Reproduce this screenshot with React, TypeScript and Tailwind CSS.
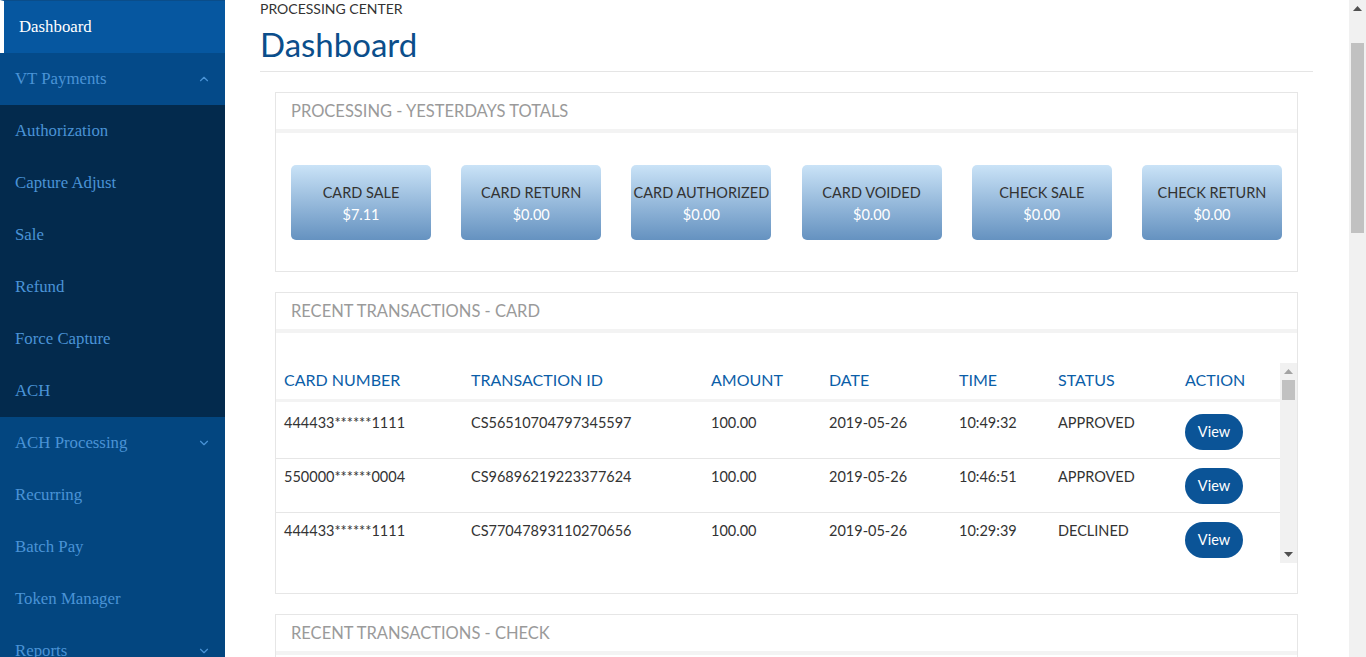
import { ChevronDown, ChevronUp } from "lucide-react";

const nav = [
  { label: "Dashboard", kind: "active" },
  { label: "VT Payments", kind: "open", chevron: "up" },
  { label: "Authorization", kind: "sub" },
  { label: "Capture Adjust", kind: "sub" },
  { label: "Sale", kind: "sub" },
  { label: "Refund", kind: "sub" },
  { label: "Force Capture", kind: "sub" },
  { label: "ACH", kind: "sub" },
  { label: "ACH Processing", kind: "item", chevron: "down" },
  { label: "Recurring", kind: "item" },
  { label: "Batch Pay", kind: "item" },
  { label: "Token Manager", kind: "item" },
  { label: "Reports", kind: "item", chevron: "down" },
];

const totals = [
  { label: "CARD SALE", value: "$7.11" },
  { label: "CARD RETURN", value: "$0.00" },
  { label: "CARD AUTHORIZED", value: "$0.00" },
  { label: "CARD VOIDED", value: "$0.00" },
  { label: "CHECK SALE", value: "$0.00" },
  { label: "CHECK RETURN", value: "$0.00" },
];

const rows = [
  ["444433******1111", "CS56510704797345597", "100.00", "2019-05-26", "10:49:32", "APPROVED"],
  ["550000******0004", "CS96896219223377624", "100.00", "2019-05-26", "10:46:51", "APPROVED"],
  ["444433******1111", "CS77047893110270656", "100.00", "2019-05-26", "10:29:39", "DECLINED"],
];

const cols = ["CARD NUMBER", "TRANSACTION ID", "AMOUNT", "DATE", "TIME", "STATUS", "ACTION"];
const colW = ["w-[187px]", "w-[240px]", "w-[118px]", "w-[130px]", "w-[99px]", "w-[127px]", "flex-1"];

export default function App() {
  return (
    <div className="flex h-[657px] overflow-hidden bg-white font-['Lato',sans-serif]">
      <Sidebar />
      <main className="flex-1 px-[35px] pr-[36px]">
        <div className="text-[14px] leading-[16px] text-[#333] pt-[1px]">PROCESSING CENTER</div>
        <h1 className="text-[33px] leading-[40px] text-[#0b4e8b] mt-[7px]">Dashboard</h1>
        <div className="border-b border-[#e5e5e5] mt-[7px]" />

        <div className="px-[15px] pt-[20px] space-y-[20px]">
          <Panel title="PROCESSING - YESTERDAYS TOTALS">
            <div className="flex justify-between px-[15px] pt-[32px] pb-[31px]">
              {totals.map((t) => (
                <div
                  key={t.label}
                  className="w-[140px] h-[75px] rounded-[5px] bg-gradient-to-b from-[#cae3f7] to-[#6592c0] flex flex-col items-center justify-center pt-[2px] leading-[22px] text-[14.5px]"
                >
                  <div className="text-[#333] whitespace-nowrap">{t.label}</div>
                  <div className="text-white">{t.value}</div>
                </div>
              ))}
            </div>
          </Panel>

          <Panel title="RECENT TRANSACTIONS - CARD">
            <div className="py-[30px]">
              <div className="flex h-[200px]">
                <div className="flex-1 overflow-hidden">
                  <div className="flex h-[39px] items-center pb-[2px] border-b-[3px] border-[#f3f3f3] box-border">
                    {cols.map((c, i) => (
                      <div key={c} className={`${colW[i]} px-2 text-[16px] text-[#0b5ea8] whitespace-nowrap`}>
                        {c}
                      </div>
                    ))}
                  </div>
                  <div className="h-[3px]" />
                  {rows.map((r, ri) => (
                    <div key={ri} className="flex h-[54px] border-b border-[#e6e6e6] text-[14.5px] text-[#333]">
                      {r.map((v, i) => (
                        <div key={i} className={`${colW[i]} px-2 pt-[8px] leading-[20px] whitespace-nowrap`}>
                          {v}
                        </div>
                      ))}
                      <div className="flex-1 px-2 pt-[9px]">
                        <button className="h-[36px] w-[58px] rounded-full bg-[#0b5497] text-white text-[14.5px]">
                          View
                        </button>
                      </div>
                    </div>
                  ))}
                </div>
                <ScrollBar thumbTop="mt-[0px]" thumbH="h-[20px]" />
              </div>
            </div>
          </Panel>

          <Panel title="RECENT TRANSACTIONS - CHECK">
            <div className="h-[200px]" />
          </Panel>
        </div>
      </main>
      <ScrollBar thumbTop="mt-[26px]" thumbH="h-[190px]" page />
    </div>
  );
}

function Sidebar() {
  return (
    <aside className="w-[225px] shrink-0 bg-[#034680] font-['Liberation_Serif',serif] text-[16.8px]">
      {nav.map((n) => {
        const bg =
          n.kind === "active"
            ? "h-[53px] bg-[#0657a0] text-white border-l-4 border-white pl-[15px] border-t border-t-[#0a4d8a]"
            : n.kind === "open"
              ? "h-[52px] bg-[#044a89] text-[#4a93d6] pl-[15px]"
              : n.kind === "sub"
                ? "h-[52px] bg-[#032a4d] text-[#4a93d6] pl-[15px]"
                : "h-[52px] text-[#4a93d6] pl-[15px]";
        return (
          <div key={n.label} className={`flex items-center justify-between pr-[14px] ${bg}`}>
            <span>{n.label}</span>
            {n.chevron === "up" && <ChevronUp size={14} strokeWidth={2} />}
            {n.chevron === "down" && <ChevronDown size={14} strokeWidth={2} />}
          </div>
        );
      })}
    </aside>
  );
}

function Panel({ title, children }: { title: string; children: React.ReactNode }) {
  return (
    <section className="border border-[#e6e6e6] bg-white">
      <div className="h-[36px] flex items-center px-[15px] border-b-4 border-[#f3f3f3] box-content text-[16.5px] text-[#9a9a9a]">
        {title}
      </div>
      {children}
    </section>
  );
}

function ScrollBar({ thumbTop, thumbH, page }: { thumbTop: string; thumbH: string; page?: boolean }) {
  return (
    <div className={`w-[17px] shrink-0 bg-[#f1f1f1] flex flex-col items-center ${page ? "h-full" : "h-[200px]"}`}>
      <div className="h-[17px] flex items-center justify-center">
        <svg width="9" height="5" viewBox="0 0 9 5">
          <path d="M0 5 L4.5 0 L9 5 Z" fill={page ? "#505050" : "#a3a3a3"} />
        </svg>
      </div>
      <div className={`w-[13px] bg-[#c1c1c1] ${thumbTop} ${thumbH}`} />
      <div className="flex-1" />
      <div className="h-[17px] flex items-center justify-center">
        {!page && (
          <svg width="9" height="5" viewBox="0 0 9 5">
            <path d="M0 0 L9 0 L4.5 5 Z" fill="#505050" />
          </svg>
        )}
      </div>
    </div>
  );
}
